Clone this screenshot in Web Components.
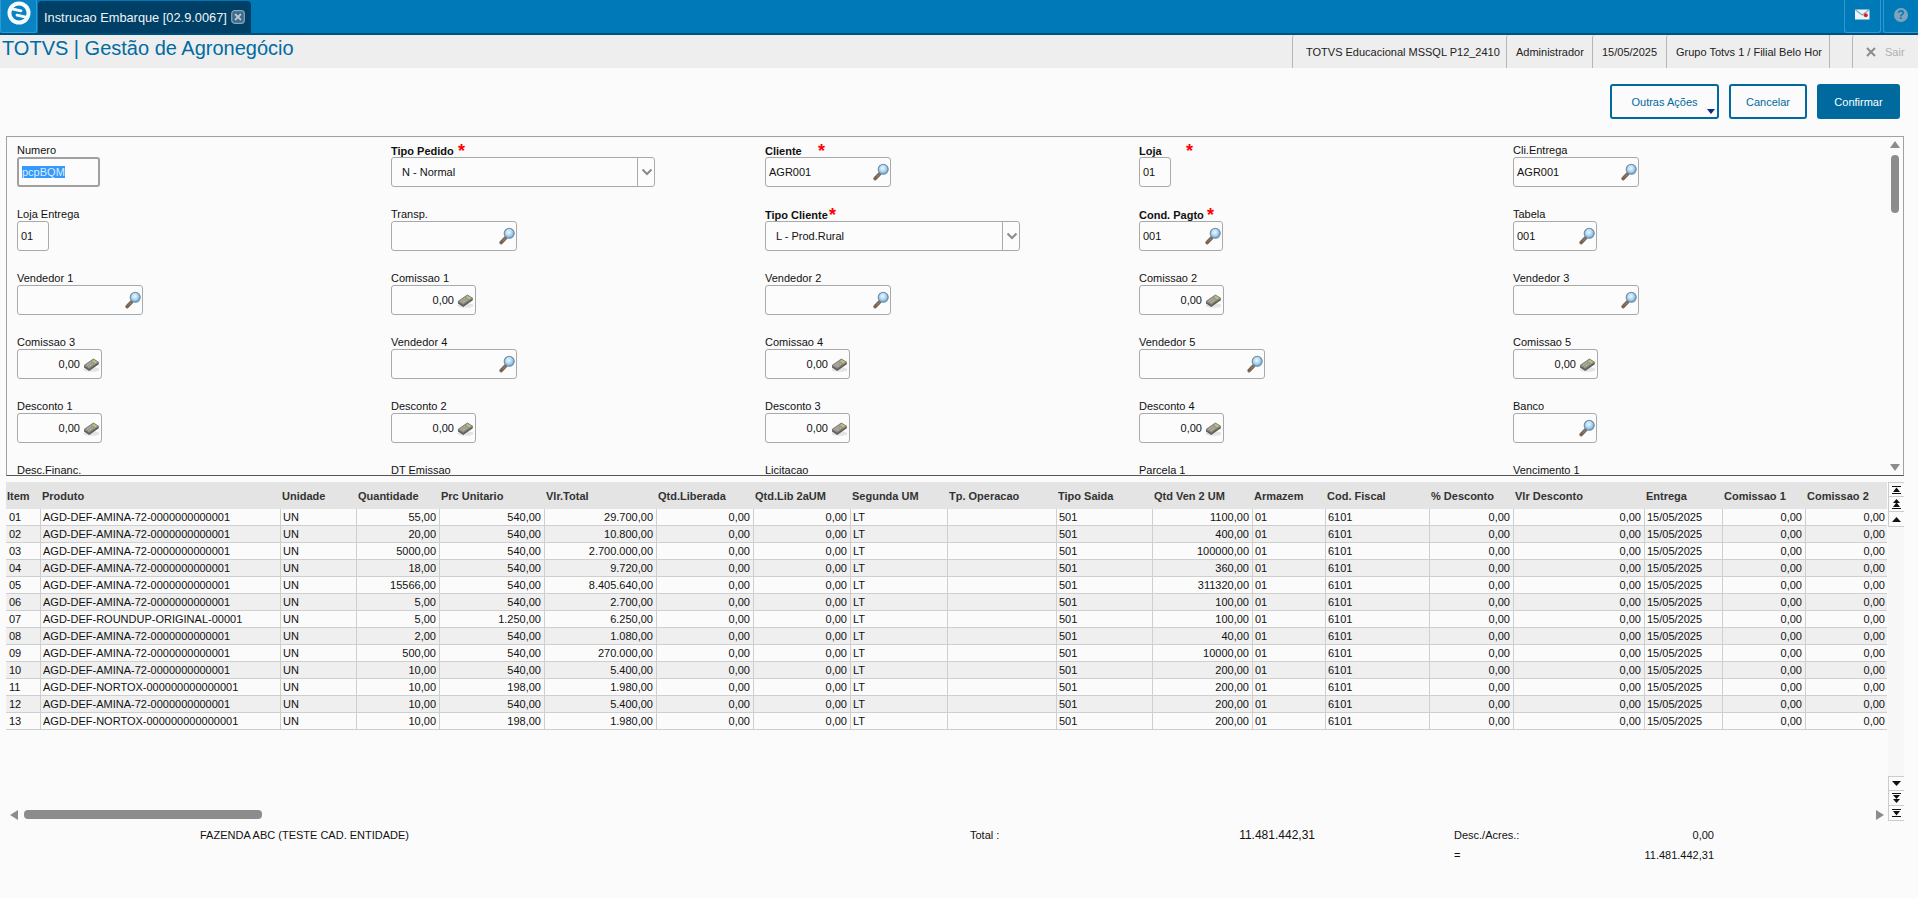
<!DOCTYPE html>
<html>
<head>
<meta charset="utf-8">
<title>Instrucao Embarque</title>
<style>
    html, body { margin: 0; padding: 0; height: 100%; overflow: hidden; }
    body { background: #fbfbfb; font: 11px "Liberation Sans", Arial, sans-serif; color: #111; }
</style>
</head>
<body>
<app-shell></app-shell>
<script>
const ICON_SEARCH = `<svg width="16" height="18" viewBox="0 0 16 18"><defs><radialGradient id="ls" cx=".45" cy=".4" r=".65"><stop offset="0" stop-color="#f0f8fe"/><stop offset=".55" stop-color="#a9d2f0"/><stop offset="1" stop-color="#4f8fc2"/></radialGradient></defs><path d="M6.500 11 2.200 15.600" stroke="#7a6453" stroke-width="3.600" stroke-linecap="round"/><path d="M6.500 11 4 13.700" stroke="#a08c7c" stroke-width="1"/><circle cx="10.200" cy="6.300" r="5" fill="url(#ls)" stroke="#6b8ba3" stroke-width="1.100"/></svg>`;
const ICON_CALC = `<svg width="17" height="15" viewBox="0 0 17 15"><ellipse cx="8.500" cy="12.500" rx="8" ry="2.300" fill="#e4e4e4"/><path d="M1.200 8.300 10.400 2 15.600 5.200 6.200 11.600z" fill="#9a958a" stroke="#85807a" stroke-width="1" stroke-linejoin="round"/><path d="M1 8.500V10.500L6.200 14 15.800 7.300V5.300L6.200 11.800z" fill="#625e55"/><path d="M9 4.200 10.700 3 14.200 5.100 12.500 6.300z" fill="#a8d46e"/><path d="M3.800 8.300 7.900 5.500M5.700 9.500 9.800 6.700" stroke="#cfccc3" stroke-width="1" stroke-dasharray="1.200 .8"/></svg>`;

const topTpl = document.createElement('template');
topTpl.innerHTML = `
<style>
    :host { display: flex; height: 33px; background: #0079b8; border-bottom: 2px solid #00507e; }
    .logo { width: 37px; background: #0a83c2; border: 1px solid #2d9ad4; border-top: 0; border-radius: 0 0 3px 3px; box-sizing: border-box; display: flex; align-items: center; justify-content: center; padding-bottom: 6px; }
    .tab { margin: 1px 0 0 1px; width: 213px; background: #003f66; border-radius: 4px 4px 0 0; color: #eef4f8; display: flex; align-items: center; padding-left: 6px; box-sizing: border-box; font-size: 12.800px; gap: 4px; white-space: nowrap; }
    .sp { flex: 1; }
    .btn { width: 37px; border: 1px solid #2d9ad4; border-top: 0; border-radius: 0 0 3px 3px; display: flex; align-items: center; justify-content: center; box-sizing: border-box; padding-bottom: 3px; }
    .btn.last { width: 35px; margin-left: 2px; border-right: 0; border-radius: 0 0 0 3px; }
</style>
<div class="logo">
    <svg width="24" height="24" viewBox="0 0 24 24"><circle cx="12" cy="12" r="11.500" fill="#f6fbfe"/><circle cx="12" cy="12" r="7.600" fill="#0a83c2"/><path d="M5 7.800 14 9.800M19 16.200 10 14.200" stroke="#f6fbfe" stroke-width="2.800" stroke-linecap="round"/></svg>
</div>
<div class="tab"><span>Instrucao Embarque [02.9.0067]</span>
    <svg width="14" height="14" viewBox="0 0 14 14"><rect x=".7" y=".7" width="12.600" height="12.600" rx="3" fill="#3d6a88" stroke="#8ba6b8" stroke-width="1.200"/><path d="M4 4l6 6M10 4l-6 6" stroke="#b8c8d4" stroke-width="1.800"/></svg>
</div>
<div class="sp"></div>
<div class="btn">
    <svg width="15" height="11" viewBox="0 0 15 11"><rect y=".5" width="14.500" height="10" rx=".6" fill="#eef3f6"/><path d="M.3 .8 7.200 6 14.300 .8" fill="none" stroke="#7fa9c2" stroke-width="1.200"/><circle cx="10.800" cy="6.300" r="2" fill="#e01b24"/></svg>
</div>
<div class="btn last">
    <svg width="14" height="14" viewBox="0 0 14 14"><circle cx="7" cy="7" r="7" fill="#7ea4ba"/><text x="7" y="11.200" text-anchor="middle" font-family="Liberation Sans" font-weight="700" font-size="12" fill="#0079b8">?</text></svg>
</div>`;
class TopBar extends HTMLElement {
    connectedCallback() {
        this.attachShadow({mode: 'open'}).appendChild(topTpl.content.cloneNode(true));
    }
}
customElements.define('top-bar', TopBar);

const headTpl = document.createElement('template');
headTpl.innerHTML = `
<style>
    :host { display: flex; height: 33px; background: #eee; align-items: stretch; color: #222; }
    h1 { flex: 1; margin: 0; padding: 1px 0 0 2px; font: 400 20px/24px "Liberation Sans", Arial, sans-serif; color: #006ba3; }
    .cell { border-left: 1px solid #b5b5b5; display: flex; align-items: center; box-sizing: border-box; white-space: nowrap; border-radius: 3px 0 0 0; padding-left: 9px; }
    .gap { border-left: 1px solid #b5b5b5; width: 23px; box-sizing: border-box; }
    .sair { color: #b0b0b0; gap: 9px; width: 66px; padding-left: 13px; }
</style>
<h1>TOTVS | Gestão de Agronegócio</h1>
<div class="cell" style="width:214px;padding-left:13px">TOTVS Educacional MSSQL P12_2410</div>
<div class="cell" style="width:86px">Administrador</div>
<div class="cell" style="width:74px">15/05/2025</div>
<div class="cell" style="width:163px">Grupo Totvs 1 / Filial Belo Hor</div>
<div class="gap"></div>
<div class="cell sair">
    <svg width="10" height="10" viewBox="0 0 10 10"><path d="M1 1l8 8M9 1 1 9" stroke="#8a8a8a" stroke-width="1.900"/></svg><span>Sair</span>
</div>`;
class PageHeader extends HTMLElement {
    connectedCallback() {
        this.attachShadow({mode: 'open'}).appendChild(headTpl.content.cloneNode(true));
    }
}
customElements.define('page-header', PageHeader);

const actTpl = document.createElement('template');
actTpl.innerHTML = `
<style>
    :host { display: flex; justify-content: flex-end; gap: 10px; padding: 16px 18px 0 0; height: 35px; }
    button { font: 11px "Liberation Sans", Arial, sans-serif; border-radius: 3px; border: 2px solid #006a9e; background: #fbfbfb; color: #006a9e; padding: 0; height: 35px; position: relative; box-sizing: border-box; }
    .more { width: 109px; }
    .more i { position: absolute; right: 2px; bottom: 3px; border: 4px solid transparent; border-top: 5px solid #0a2a8c; border-bottom: 0; }
    .cancel { width: 78px; }
    .ok { width: 83px; background: #006a9e; color: #fff; }
</style>
<button class="more">Outras Ações<i></i></button>
<button class="cancel">Cancelar</button>
<button class="ok">Confirmar</button>`;
class ActionBar extends HTMLElement {
    connectedCallback() {
        this.attachShadow({mode: 'open'}).appendChild(actTpl.content.cloneNode(true));
    }
}
customElements.define('action-bar', ActionBar);

// a single labelled field of the form
class FormField extends HTMLElement {
    connectedCallback() {
        const a = n => this.getAttribute(n);
        const kind = a('kind') || 'text';
        const w = a('w') || 125;
        const val = a('value') || '';
        let inner = `<span class="v">${val}</span>`;
        if (kind == 'search') inner += `<span class="ic">${ICON_SEARCH}</span>`;
        if (kind == 'calc') inner = `<span class="v r">${val}</span><span class="ic calc">${ICON_CALC}</span>`;
        if (kind == 'select') inner = `<span class="v sel">${val}</span><span class="arrow"><svg width="12" height="8" viewBox="0 0 12 8"><path d="M1.500 1.500 6 6l4.500-4.500" fill="none" stroke="#8a8a8a" stroke-width="2"/></svg></span>`;
        if (kind == 'focus') inner = `<span class="v"><mark>${val}</mark></span>`;
        const star = a('star');
        this.attachShadow({mode: 'open'}).innerHTML = `
<style>
    :host { display: block; height: 64px; }
    label { display: block; height: 13px; line-height: 13px; position: relative; white-space: nowrap; }
    label.b { font-weight: 700; top: 1px; }
    label b { position: absolute; top: -3px; color: #f00; font-size: 18px; font-weight: 700; line-height: 18px; }
    .box { width: ${w}px; height: 30px; box-sizing: border-box; border: 1px solid #a9a9a9; border-radius: 3px; background: #fcfcfc; display: flex; align-items: center; padding-left: 3px; overflow: hidden; }
    .box.focus { border: 2px solid #a0a0a0; padding-left: 3px; }
    .v { flex: 1; white-space: nowrap; }
    .v.r { text-align: right; }
    .v.sel { padding-left: 7px; }
    mark { background: #3399ff; color: #dcecfb; }
    .ic { display: flex; margin: 0 1px 0 3px; }
    .arrow { width: 17px; height: 100%; border-left: 1px solid #a9a9a9; display: flex; align-items: center; justify-content: center; margin-right: -1px; }
</style>
<label class="${a('bold') != null ? 'b' : ''}">${a('label')}${star ? `<b style="left:${star}px">*</b>` : ''}</label>
<div class="box ${kind == 'focus' ? 'focus' : ''}">${inner}</div>`;
    }
}
customElements.define('form-field', FormField);

const formTpl = document.createElement('template');
formTpl.innerHTML = `
<style>
    :host { display: block; height: 338px; margin: 0 14px 0 6px; border: 1px solid #9aa3a8; border-bottom-color: #555; position: relative; overflow: hidden; }
    .grid { display: grid; grid-template-columns: repeat(5, 374px); padding: 7px 0 0 10px; }
    .track { position: absolute; right: 0; top: 0; bottom: 0; width: 16px; background: #fbfbfb; }
    .up { position: absolute; left: 3px; top: 4px; border: 4px solid transparent; border-width: 0 5px 7px; border-bottom-color: #8c8c8c; }
    .down { position: absolute; left: 3px; bottom: 4px; border: 4px solid transparent; border-width: 7px 5px 0; border-top-color: #8c8c8c; }
    .thumb { position: absolute; left: 4px; top: 18px; width: 8px; height: 58px; background: #8c8c8c; border-radius: 4px; }
</style>
<div class="grid"><slot></slot></div>
<div class="track"><i class="up"></i><i class="thumb"></i><i class="down"></i></div>`;
class FormPanel extends HTMLElement {
    connectedCallback() {
        this.attachShadow({mode: 'open'}).appendChild(formTpl.content.cloneNode(true));
    }
}
customElements.define('form-panel', FormPanel);

const COLS = [
    ['Item', 35], ['Produto', 240], ['Unidade', 76], ['Quantidade', 83, 1], ['Prc Unitario', 105, 1], ['Vlr.Total', 112, 1],
    ['Qtd.Liberada', 97, 1], ['Qtd.Lib 2aUM', 97, 1], ['Segunda UM', 97], ['Tp. Operacao', 109], ['Tipo Saida', 96],
    ['Qtd Ven 2 UM', 100, 1], ['Armazem', 73], ['Cod. Fiscal', 104], ['% Desconto', 84, 1], ['Vlr Desconto', 131, 1],
    ['Entrega', 78], ['Comissao 1', 83, 1], ['Comissao 2', 81, 1]
];
const A = 'AGD-DEF-AMINA-72-0000000000001', N = 'AGD-DEF-NORTOX-000000000000001', R = 'AGD-DEF-ROUNDUP-ORIGINAL-00001';
const ROWS = [
    [A, '55,00', '540,00', '29.700,00', '1100,00'],
    [A, '20,00', '540,00', '10.800,00', '400,00'],
    [A, '5000,00', '540,00', '2.700.000,00', '100000,00'],
    [A, '18,00', '540,00', '9.720,00', '360,00'],
    [A, '15566,00', '540,00', '8.405.640,00', '311320,00'],
    [A, '5,00', '540,00', '2.700,00', '100,00'],
    [R, '5,00', '1.250,00', '6.250,00', '100,00'],
    [A, '2,00', '540,00', '1.080,00', '40,00'],
    [A, '500,00', '540,00', '270.000,00', '10000,00'],
    [A, '10,00', '540,00', '5.400,00', '200,00'],
    [N, '10,00', '198,00', '1.980,00', '200,00'],
    [A, '10,00', '540,00', '5.400,00', '200,00'],
    [N, '10,00', '198,00', '1.980,00', '200,00']
];

class ItemGrid extends HTMLElement {
    connectedCallback() {
        const root = this.attachShadow({mode: 'open'});
        const head = COLS.map(c => `<th>${c[0]}</th>`).join('');
        const body = ROWS.map((r, i) => {
            const cells = [String(i + 1).padStart(2, '0'), r[0], 'UN', r[1], r[2], r[3], '0,00', '0,00', 'LT', '', '501', r[4], '01', '6101', '0,00', '0,00', '15/05/2025', '0,00', '0,00'];
            return '<tr>' + cells.map((t, k) => `<td class="${COLS[k][2] ? 'n' : ''}">${t}</td>`).join('') + '</tr>';
        }).join('');
        root.innerHTML = `
<style>
    :host { display: block; height: 248px; overflow: hidden; }
    table { border-collapse: separate; border-spacing: 0; table-layout: fixed; width: 1881px; font-size: 11px; }
    th { height: 27px; padding: 0 0 0 1px; background: #e4e4e4; text-align: left; font-weight: 700; color: #333; white-space: nowrap; overflow: hidden; }
    td { height: 16px; padding: 0 3px 0 2px; line-height: 16px; border-bottom: 1px solid #cfcfcf; border-right: 1px solid #cfcfcf; white-space: nowrap; overflow: hidden; }
    td:first-child { padding-left: 3px; }
    td:last-child { border-right: 0; padding-right: 2px; }
    td.n { text-align: right; }
    tr:nth-child(even) td { background: #efefef; }
</style>
<table>
    <colgroup>${COLS.map(c => `<col style="width:${c[1]}px">`).join('')}</colgroup>
    <thead><tr>${head}</tr></thead>
    <tbody>${body}</tbody>
</table>`;
    }
}
customElements.define('item-grid', ItemGrid);

const navTpl = document.createElement('template');
navTpl.innerHTML = `
<style>
    :host { display: flex; flex-direction: column; justify-content: space-between; width: 16px; height: 339px; background: #f7f7f8; }
    .set { background: #fbfbfb; display: flex; flex-direction: column; }
    .set span { height: 15px; box-sizing: border-box; border: 1px solid #ccc; border-width: 0 0 1px 1px; display: flex; align-items: center; justify-content: center; }
    .set span:first-child { border-top: 1px solid #ccc; }
</style>
<div class="set">
    <span><svg width="9" height="8" viewBox="0 0 9 8"><path d="M0 0h9v1H0zM4.500 1.500 8 6H1zM0 7h9v1H0z" fill="#111"/></svg></span>
    <span><svg width="9" height="10" viewBox="0 0 9 10"><path d="M4.500 0 8 4H1zM4.500 3.500 8 8H1zM0 9h9v1H0z" fill="#111"/></svg></span>
    <span><svg width="9" height="5" viewBox="0 0 9 5"><path d="M4.500 0 9 5H0z" fill="#111"/></svg></span>
</div>
<div class="set">
    <span><svg width="9" height="5" viewBox="0 0 9 5"><path d="M0 0h9L4.500 5z" fill="#111"/></svg></span>
    <span><svg width="9" height="10" viewBox="0 0 9 10"><path d="M0 0h9v1H0zM1 2h7L4.500 6zM1 6h7l-3.500 4z" fill="#111"/></svg></span>
    <span><svg width="9" height="8" viewBox="0 0 9 8"><path d="M0 0h9v1H0zM1 2h7L4.500 6.500zM0 7h9v1H0z" fill="#111"/></svg></span>
</div>`;
class GridNav extends HTMLElement {
    connectedCallback() {
        this.attachShadow({mode: 'open'}).appendChild(navTpl.content.cloneNode(true));
    }
}
customElements.define('grid-nav', GridNav);

const hsTpl = document.createElement('template');
hsTpl.innerHTML = `
<style>
    :host { display: flex; align-items: center; height: 9px; margin-top: 80px; padding: 0 4px; }
    .l { border: 5px solid transparent; border-width: 5px 8px 5px 0; border-right-color: #8c8c8c; }
    .thumb { margin-left: 6px; width: 238px; height: 9px; border-radius: 4px; background: #8c8c8c; }
    .sp { flex: 1; }
    .r { border: 5px solid transparent; border-width: 5px 0 5px 8px; border-left-color: #8c8c8c; }
</style>
<i class="l"></i><i class="thumb"></i><i class="sp"></i><i class="r"></i>`;
class HScroll extends HTMLElement {
    connectedCallback() {
        this.attachShadow({mode: 'open'}).appendChild(hsTpl.content.cloneNode(true));
    }
}
customElements.define('h-scroll', HScroll);

const totTpl = document.createElement('template');
totTpl.innerHTML = `
<style>
    :host { display: grid; grid-template-columns: 770px 345px 139px 260px; grid-auto-rows: 20px; padding: 4px 0 0 200px; align-items: center; white-space: nowrap; }
    .pair { display: flex; justify-content: space-between; align-items: center; }
    .big { font-size: 12px; }
    .c4 { grid-column: 4; }
</style>
<span>FAZENDA ABC (TESTE CAD. ENTIDADE)</span>
<span class="pair"><span>Total :</span><span class="big">11.481.442,31</span></span>
<span class="pair c4"><span>Desc./Acres.:</span><span>0,00</span></span>
<span class="pair c4"><span>=</span><span>11.481.442,31</span></span>`;
class TotalsBar extends HTMLElement {
    connectedCallback() {
        this.attachShadow({mode: 'open'}).appendChild(totTpl.content.cloneNode(true));
    }
}
customElements.define('totals-bar', TotalsBar);

const shellTpl = document.createElement('template');
shellTpl.innerHTML = `
<style>
    :host { display: block; height: 898px; overflow: hidden; }
    .form-wrap { margin-top: 17px; }
    .grid-row { display: flex; margin: 6px 14px 0 6px; height: 339px; }
    .grid-col { flex: 1; min-width: 0; }
</style>
<top-bar></top-bar>
<page-header></page-header>
<action-bar></action-bar>
<div class="form-wrap"><slot></slot></div>
<div class="grid-row">
    <div class="grid-col"><item-grid></item-grid><h-scroll></h-scroll></div>
    <grid-nav></grid-nav>
</div>
<totals-bar></totals-bar>`;
class AppShell extends HTMLElement {
    connectedCallback() {
        this.attachShadow({mode: 'open'}).appendChild(shellTpl.content.cloneNode(true));
    }
}
customElements.define('app-shell', AppShell);

// fill the form
const F = [
    {label: 'Numero', kind: 'focus', w: 83, value: 'pcpBQM'},
    {label: 'Tipo Pedido', bold: 1, star: 67, kind: 'select', w: 264, value: 'N - Normal'},
    {label: 'Cliente', bold: 1, star: 53, kind: 'search', w: 126, value: 'AGR001'},
    {label: 'Loja', bold: 1, star: 47, w: 32, value: '01'},
    {label: 'Cli.Entrega', kind: 'search', w: 126, value: 'AGR001'},
    {label: 'Loja Entrega', w: 32, value: '01'},
    {label: 'Transp.', kind: 'search', w: 126},
    {label: 'Tipo Cliente', bold: 1, star: 64, kind: 'select', w: 255, value: 'L - Prod.Rural'},
    {label: 'Cond. Pagto', bold: 1, star: 68, kind: 'search', w: 84, value: '001'},
    {label: 'Tabela', kind: 'search', w: 84, value: '001'},
    {label: 'Vendedor 1', kind: 'search', w: 126},
    {label: 'Comissao 1', kind: 'calc', w: 85, value: '0,00'},
    {label: 'Vendedor 2', kind: 'search', w: 126},
    {label: 'Comissao 2', kind: 'calc', w: 85, value: '0,00'},
    {label: 'Vendedor 3', kind: 'search', w: 126},
    {label: 'Comissao 3', kind: 'calc', w: 85, value: '0,00'},
    {label: 'Vendedor 4', kind: 'search', w: 126},
    {label: 'Comissao 4', kind: 'calc', w: 85, value: '0,00'},
    {label: 'Vendedor 5', kind: 'search', w: 126},
    {label: 'Comissao 5', kind: 'calc', w: 85, value: '0,00'},
    {label: 'Desconto 1', kind: 'calc', w: 85, value: '0,00'},
    {label: 'Desconto 2', kind: 'calc', w: 85, value: '0,00'},
    {label: 'Desconto 3', kind: 'calc', w: 85, value: '0,00'},
    {label: 'Desconto 4', kind: 'calc', w: 85, value: '0,00'},
    {label: 'Banco', kind: 'search', w: 84},
    {label: 'Desc.Financ.', kind: 'calc', w: 85},
    {label: 'DT Emissao', w: 85},
    {label: 'Licitacao', w: 85},
    {label: 'Parcela 1', w: 85},
    {label: 'Vencimento 1', w: 85}
];
const panel = document.createElement('form-panel');
F.forEach(f => {
    const el = document.createElement('form-field');
    Object.keys(f).forEach(k => el.setAttribute(k, f[k]));
    panel.appendChild(el);
});
document.querySelector('app-shell').appendChild(panel);
</script>
</body>
</html>
